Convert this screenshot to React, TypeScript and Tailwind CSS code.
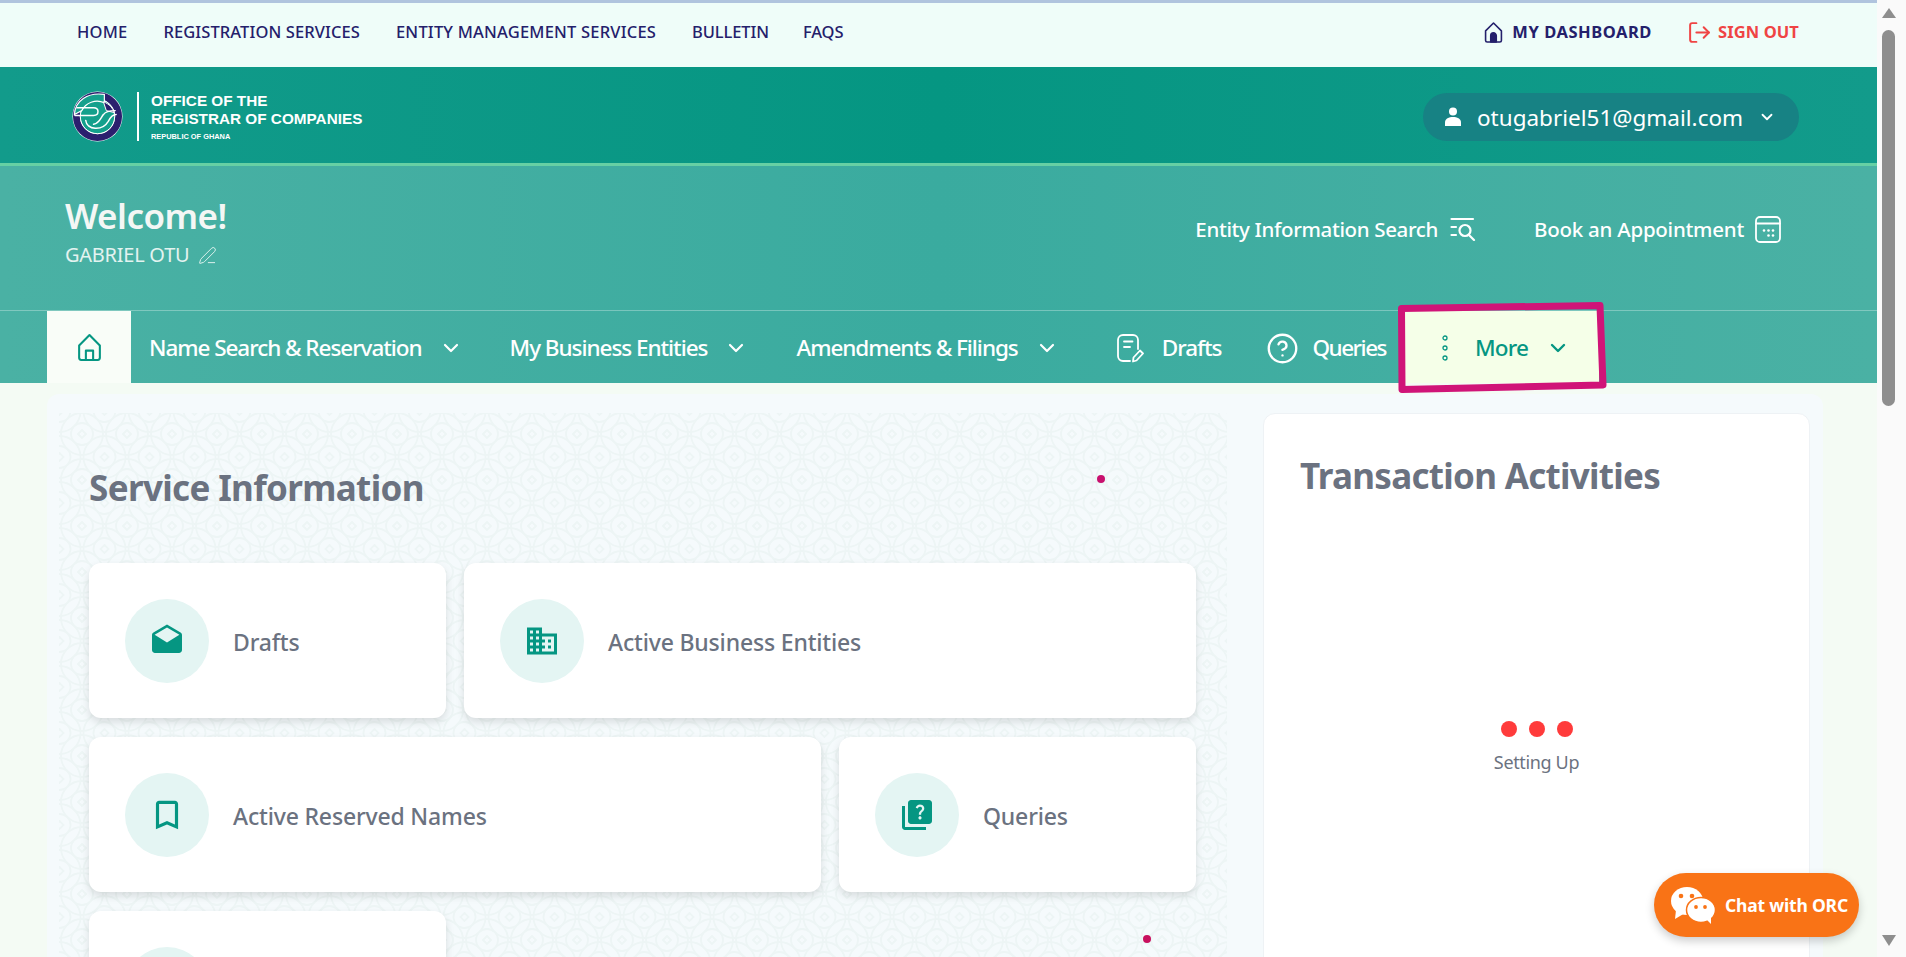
import React from "react";
import { ChevronDown, CircleHelp, LogOut, PenLine } from "lucide-react";
import { MdDrafts, MdBusiness, MdBookmarkBorder, MdQuiz } from "react-icons/md";

const HomeIcon = ({ className, filled }: { className?: string; filled?: boolean }) => (
  <svg viewBox="0 0 24 28" fill="none" className={className} stroke="currentColor" strokeWidth="2" strokeLinejoin="round" strokeLinecap="round">
    <path d="M12 2 L22 12 V24 a2 2 0 0 1 -2 2 H4 a2 2 0 0 1 -2 -2 V12 Z" />
    {filled ? <path d="M8.5 26 V18 a3.5 3.5 0 0 1 7 0 V26 Z" fill="currentColor" /> : <path d="M8.5 26 V17 H15.5 V26" />}
  </svg>
);

const Logo = () => (
  <svg viewBox="0 0 52 52" className="h-[51px] w-[51px] shrink-0">
    <circle cx="26" cy="26" r="25.5" fill="#ffffff" />
    <circle cx="26" cy="26" r="21.5" fill="none" stroke="#2b1f6e" strokeWidth="7" />
    <circle cx="26" cy="26" r="17.5" fill="#14a08c" stroke="#fff" strokeWidth="1" />
    <path d="M2.5 24 C3 10 16 1 33 3.5 L33 12 C24 8 14 12 10 20 Z" fill="#14a08c" stroke="#fff" strokeWidth="1.2" />
    <path d="M32 11 C38 13 42 18 43 22 L35 20 Z" fill="#2b1f6e" stroke="#fff" strokeWidth="1" />
    <g fill="none" stroke="#fff" strokeWidth="1.5" strokeLinecap="round">
      <path d="M5 17 H22 C28 17 28 25 22 25 H3" />
      <path d="M14 30 C15 40 31 41 37 31 C39 27 41 24 45 24" />
      <path d="M22 34 C28 33 29 28 32 24 C34 21 38 20 44 20" />
    </g>
  </svg>
);

const SearchListIcon = () => (
  <svg viewBox="0 0 26 24" className="h-6 w-[26px]" fill="none" stroke="#fff" strokeWidth="2.2" strokeLinecap="round">
    <path d="M1.5 2 H23" />
    <path d="M1.5 10 H6" />
    <path d="M1.5 18 H6" />
    <circle cx="15" cy="13.5" r="5.5" />
    <path d="M19 18 L24 23" />
  </svg>
);

const CalendarIcon = () => (
  <svg viewBox="0 0 26 27" className="h-[27px] w-[26px]" fill="none" stroke="#fff" strokeWidth="1.8" strokeLinecap="round">
    <rect x="1" y="1" width="24" height="25" rx="4" />
    <path d="M1 7.5 H25" />
    <g fill="#fff" stroke="none">
      <circle cx="9" cy="14.5" r="1.3" /><circle cx="13.5" cy="14.5" r="1.3" /><circle cx="18" cy="14.5" r="1.3" />
      <circle cx="13.5" cy="19.5" r="1.3" /><circle cx="18" cy="19.5" r="1.3" />
    </g>
  </svg>
);

const DraftNavIcon = () => (
  <svg viewBox="0 0 28 30" className="h-[30px] w-[28px]" fill="none" stroke="#fff" strokeWidth="1.8" strokeLinecap="round" strokeLinejoin="round">
    <path d="M14 28 H7 a5 5 0 0 1 -5 -5 V7 a5 5 0 0 1 5 -5 H17 a5 5 0 0 1 5 5 V16" />
    <path d="M8 8.5 H16.5" />
    <path d="M8 14 H14" />
    <path d="M17 28.5 L17.5 24.5 L24 17.5 L27 20.5 L20.5 27.5 Z" />
  </svg>
);

const UserIcon = () => (
  <svg viewBox="0 0 18 20" className="h-5 w-[18px]" fill="#fff">
    <circle cx="9" cy="4.5" r="4" />
    <path d="M1 19 V15.5 C1 11.5 5 10 9 10 C13 10 17 11.5 17 15.5 V19 Z" />
  </svg>
);

const ChatIcon = () => (
  <svg viewBox="0 0 46 38" className="h-[38px] w-[46px]" fill="#fff">
    <ellipse cx="17" cy="15" rx="16" ry="14" />
    <path d="M6 24 L5 33 L15 27 Z" />
    <circle cx="11" cy="10" r="2.3" fill="#f97316" />
    <circle cx="22" cy="10" r="2.3" fill="#f97316" />
    <ellipse cx="31" cy="24" rx="14.5" ry="12.5" fill="#fff" stroke="#f97316" strokeWidth="1.5" />
    <path d="M36 33 L41 38 L41 30 Z" />
    <circle cx="26" cy="21" r="1.9" fill="#f97316" />
    <circle cx="35" cy="21" r="1.9" fill="#f97316" />
  </svg>
);

const Pattern = () => (
  <svg className="absolute inset-0 h-full w-full" aria-hidden="true">
    <defs>
      <pattern id="orc" x="0" y="-1" width="45" height="46" patternUnits="userSpaceOnUse">
        <g fill="none" stroke="#edf5f5" strokeWidth="1.8">
          {[[23, 22], [0.5, -1], [45.5, -1], [0.5, 45], [45.5, 45]].map(([x, y], i) => (
            <g key={i}>
              <circle cx={x} cy={y} r="21" />
              <circle cx={x} cy={y} r="11" />
              <path d={`M${x} ${y - 4} L${x + 4} ${y} L${x} ${y + 4} L${x - 4} ${y} Z`} />
            </g>
          ))}
        </g>
      </pattern>
    </defs>
    <rect width="100%" height="100%" fill="url(#orc)" />
  </svg>
);

const TopLink = ({ children, className }: { children: React.ReactNode; className?: string }) => (
  <a className={`text-[16.5px] text-[#24206b] whitespace-nowrap ${className ?? "font-medium"}`}>{children}</a>
);

const NavText = ({ children, className }: { children: React.ReactNode; className?: string }) => (
  <span className={`text-[22.5px] font-medium whitespace-nowrap ${className ?? "tracking-[-1.05px] text-white"}`}>{children}</span>
);

const NavChevron = () => <ChevronDown className="h-6 w-6 text-white" strokeWidth={2.2} />;

const Card = ({ icon, label, className }: { icon: React.ReactNode; label: string; className?: string }) => (
  <div className={`flex h-[155px] items-start gap-6 rounded-xl bg-white pl-9 pt-9 shadow-[0_4px_8px_rgba(0,0,0,0.12)] ${className ?? ""}`}>
    <div className="flex h-[84px] w-[84px] shrink-0 items-center justify-center rounded-full bg-[#e4f5f3] text-[#059682]">{icon}</div>
    <span className="mt-[26px] text-[23px] font-medium tracking-[-0.17px] text-[#6b7280] whitespace-nowrap">{label}</span>
  </div>
);

export default function App() {
  return (
    <div className="flex h-[957px] w-full overflow-hidden bg-[#fafafa] [font-family:'Noto_Sans',sans-serif]">
      <main className="relative h-full w-[1877px] shrink-0 overflow-hidden bg-[#f4fbf4]">
        <div className="h-[3px] bg-[#b0c4de]" />

        <header className="flex h-[64px] items-center justify-between bg-[#effdf9] pb-[6px] pl-[77px] pr-[78px]">
          <nav className="flex items-center gap-[36px]">
            <TopLink className="font-medium tracking-[0.2px]">HOME</TopLink>
            <TopLink className="font-medium tracking-[0.1px]">REGISTRATION SERVICES</TopLink>
            <TopLink className="font-medium tracking-[0.2px]">ENTITY MANAGEMENT SERVICES</TopLink>
            <TopLink className="font-medium tracking-[-0.1px]">BULLETIN</TopLink>
            <TopLink className="font-medium tracking-[-0.1px] -ml-[2px]">FAQS</TopLink>
          </nav>
          <div className="flex items-center">
            <HomeIcon className="mr-[9px] h-[23px] w-[19px] text-[#24206b]" filled />
            <TopLink className="font-bold tracking-[0.55px]">MY DASHBOARD</TopLink>
            <LogOut className="ml-[35px] mr-[6px] h-[25px] w-[25px] text-[#ef4444]" strokeWidth={1.9} />
            <TopLink className="font-bold tracking-[0.1px] !text-[#ef4444]">SIGN OUT</TopLink>
          </div>
        </header>

        <div className="flex h-[99px] items-center justify-between border-b-[3px] border-[#66d0a4] bg-linear-to-r from-[#129b8b] via-[#059682] to-[#129b8b] pl-[72px] pr-[78px]">
          <div className="flex items-center">
            <div className="mt-[2px]"><Logo /></div>
            <div className="ml-[14px] mr-[12px] mt-[2px] h-[49px] w-[2px] bg-white" />
            <div className="mt-[8px] flex flex-col text-white [font-family:'Liberation_Sans',sans-serif]">
              <span className="text-[15.3px] font-bold leading-[18px]">OFFICE OF THE</span>
              <span className="text-[15.3px] font-bold leading-[18px]">REGISTRAR OF COMPANIES</span>
              <span className="text-[7.4px] font-bold leading-[18px]">REPUBLIC OF GHANA</span>
            </div>
          </div>
          <div className="mt-[4px] flex h-[48px] w-[376px] items-center rounded-full bg-[#178284] pl-[21px]">
            <UserIcon />
            <span className="ml-[15px] pt-[2px] text-[22.5px] text-white whitespace-nowrap">otugabriel51@gmail.com</span>
            <ChevronDown className="ml-[15px] h-[18px] w-[18px] text-white" strokeWidth={2.4} />
          </div>
        </div>

        <div className="bg-linear-to-r from-[#4ab1a4] via-[#3aab9f] to-[#4ab1a4]">
          <div className="flex h-[144px] items-start justify-between pl-[65px] pr-[96px]">
            <div className="pt-[24px]">
              <div className="text-[35px] font-semibold leading-[51px] tracking-[-0.55px] text-[#f4f7f5]">Welcome!</div>
              <div className="flex items-center text-[20px] leading-[28px] tracking-[-0.25px] text-[#e3f3f0]">
                GABRIEL OTU
                <PenLine className="ml-[9px] h-[19px] w-[19px]" strokeWidth={1.2} />
              </div>
            </div>
            <div className="flex items-center pt-[48px]">
              <span className="text-[20.5px] font-medium tracking-[-0.35px] text-white whitespace-nowrap">Entity Information Search</span>
              <span className="ml-[12px]"><SearchListIcon /></span>
              <span className="ml-[58px] text-[20.5px] font-medium tracking-[-0.25px] text-white whitespace-nowrap">Book an Appointment</span>
              <span className="ml-[11px]"><CalendarIcon /></span>
            </div>
          </div>
          <nav className="flex h-[73px] items-stretch border-t border-white/30 pl-[47px]">
            <div className="flex w-[84px] items-center justify-center bg-[#f9fdf8] text-[#059682]">
              <HomeIcon className="h-[29px] w-[25px]" />
            </div>
            <div className="ml-[18px] flex items-center pt-[2px]"><NavText>Name Search &amp; Reservation</NavText><span className="ml-[17px]"><NavChevron /></span></div>
            <div className="ml-[47px] flex items-center pt-[2px]"><NavText>My Business Entities</NavText><span className="ml-[17px]"><NavChevron /></span></div>
            <div className="ml-[48px] flex items-center pt-[2px]"><NavText>Amendments &amp; Filings</NavText><span className="ml-[17px]"><NavChevron /></span></div>
            <div className="ml-[57px] flex items-center pt-[2px]"><DraftNavIcon /><NavText className="ml-[18px] tracking-[-1.05px] text-white">Drafts</NavText></div>
            <div className="ml-[45px] flex items-center pt-[2px]"><CircleHelp className="h-[33px] w-[33px] text-white" strokeWidth={1.7} /><NavText className="ml-[13px] tracking-[-1.5px] text-white">Queries</NavText></div>
            <div className="ml-[19px] flex w-[194px] items-center bg-[#f5ffe8] pl-[37px] pt-[2px]">
              <svg viewBox="0 0 6 26" className="h-[26px] w-[6px] text-[#059682]" fill="none" stroke="currentColor" strokeWidth="1.3">
                <circle cx="3" cy="3" r="2" /><circle cx="3" cy="13" r="2" /><circle cx="3" cy="23" r="2" />
              </svg>
              <NavText className="ml-[27px] tracking-[-0.85px] text-[#059682]">More</NavText>
              <ChevronDown className="ml-[18px] h-6 w-6 text-[#059682]" strokeWidth={2.4} />
            </div>
          </nav>
        </div>

        <section className="ml-[47px] mt-[11px] flex h-[700px] w-[1776px] rounded-xl bg-[#f5fafc] pl-[12px] pr-[13px] pt-[19px]">
          <div className="relative w-[1168px] shrink-0 pl-[30px] pr-[31px]">
            <Pattern />
            <span className="absolute left-[1038px] top-[62px] h-[8px] w-[8px] rounded-full bg-[#c8106e]" />
            <span className="absolute left-[1084px] top-[522px] h-[8px] w-[8px] rounded-full bg-[#c8105e]" />
            <h2 className="relative pt-[49px] text-[35px] font-bold leading-[52px] tracking-[-0.65px] text-[#6b7280]">Service Information</h2>
            <div className="relative mt-[49px] grid grid-cols-3 gap-x-[18px] gap-y-[19px]">
              <Card icon={<MdDrafts size={36} />} label="Drafts" />
              <Card className="col-span-2" icon={<MdBusiness size={36} />} label="Active Business Entities" />
              <Card className="col-span-2" icon={<MdBookmarkBorder size={38} />} label="Active Reserved Names" />
              <Card icon={<MdQuiz size={36} />} label="Queries" />
              <Card icon={null} label="" />
            </div>
          </div>
          <aside className="ml-[36px] flex flex-1 flex-col rounded-t-xl border border-[#eef2f5] bg-white pl-[36px] pt-[36px]">
            <h2 className="text-[35px] font-bold leading-[52px] tracking-[-0.7px] text-[#6b7280]">Transaction Activities</h2>
            <div className="mt-[219px] -ml-[36px] flex flex-col items-center">
              <div className="flex gap-[12px]">
                <span className="h-4 w-4 rounded-full bg-[#ff3b3b]" />
                <span className="h-4 w-4 rounded-full bg-[#ff3b3b]" />
                <span className="h-4 w-4 rounded-full bg-[#ff3b3b]" />
              </div>
              <span className="mt-[12px] text-[18px] tracking-[-0.35px] text-[#6b7280]">Setting Up</span>
            </div>
          </aside>
        </section>

        <svg className="pointer-events-none absolute left-0 top-0 h-[400px] w-full" aria-hidden="true">
          <path d="M1401.5 308.5 L1600 305.5 L1603 385 L1402 389.5 Z" fill="none" stroke="#d01478" strokeWidth="7" strokeLinejoin="round" />
        </svg>

        <button className="absolute left-[1654px] top-[873px] flex h-[64px] w-[205px] items-center rounded-full bg-[#f97316] pl-[16px] shadow-[0_4px_10px_rgba(0,0,0,0.2)]">
          <ChatIcon />
          <span className="ml-[9px] text-[17.5px] font-bold tracking-[-0.2px] text-white whitespace-nowrap">Chat with ORC</span>
        </button>
      </main>

      <div className="flex h-full w-[29px] flex-col items-start pl-[5px]">
        <div className="mt-[8px] h-0 w-0 border-x-[7px] border-b-[10px] border-x-transparent border-b-[#8e8e8e]" />
        <div className="mt-[12px] h-[376px] w-[13px] rounded-full bg-[#8e8e8e]" />
        <div className="mt-auto mb-[11px] h-0 w-0 border-x-[7px] border-t-[11px] border-x-transparent border-t-[#8e8e8e]" />
      </div>
    </div>
  );
}
